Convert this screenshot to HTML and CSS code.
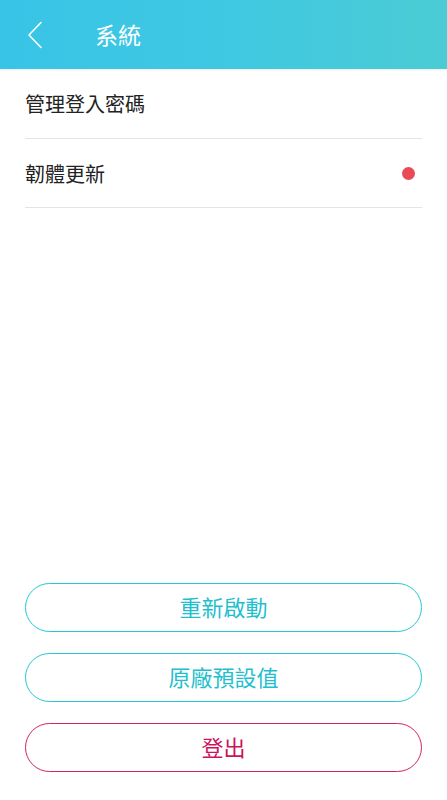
FILE: index.html
```html
<!DOCTYPE html>
<html lang="zh-Hant">
<head>
  <meta charset="UTF-8">
  <meta name="viewport" content="width=device-width, initial-scale=1.0">
  <title>系統</title>
  <link rel="stylesheet" href="styles.css">
</head>
<body>
  <div class="page">
    <div class="header">
      <a class="back" href="#">
        <svg width="16" height="28" viewBox="0 0 16 28">
          <polyline points="14,1.5 2,14 14,26.5" fill="none" stroke="#fff" stroke-width="1.6" stroke-linecap="round" stroke-linejoin="round"/>
        </svg>
      </a>
      <h1>系統</h1>
    </div>

    <div class="list">
      <div class="row">
        <span>管理登入密碼</span>
      </div>
      <div class="row">
        <span>韌體更新</span>
        <span class="dot"></span>
      </div>
    </div>

    <div class="actions">
      <button class="btn">重新啟動</button>
      <button class="btn">原廠預設值</button>
      <button class="btn btn-logout">登出</button>
    </div>
  </div>
</body>
</html>
```

FILE: styles.css
```css
body {
  margin: 0;
  font-family: "Noto Sans CJK TC", "Noto Sans", sans-serif;
  background: #fff;
  color: #222;
}
.page {
  height: 800px;
  display: flex;
  flex-direction: column;
}
.header {
  height: 69px;
  display: flex;
  align-items: center;
  background: linear-gradient(90deg, #38c4e7 0%, #3fc8e2 50%, #4bccd4 100%);
  box-shadow: 0 1px 2px rgba(0, 0, 0, 0.08);
}
.back {
  display: flex;
  margin-left: 27px;
  margin-top: 1px;
}
.header h1 {
  margin: 0 0 0 52px;
  font-size: 23px;
  font-weight: 400;
  color: #fff;
  line-height: 1;
}
.list {
  padding: 0 25px;
}
.row {
  height: 69px;
  display: flex;
  align-items: center;
  justify-content: space-between;
  border-bottom: 1px solid #e4e4e4;
  font-size: 20px;
  color: #222;
}
.row:last-child {
  height: 68px;
}
.dot {
  width: 13px;
  height: 13px;
  border-radius: 50%;
  background: #ea4a55;
  margin-right: 7px;
}
.actions {
  margin-top: auto;
  padding: 0 25px 28px;
  display: flex;
  flex-direction: column;
  gap: 21px;
}
.btn {
  height: 49px;
  border: 1.5px solid #22c8d6;
  border-radius: 25px;
  background: #fff;
  color: #1fbfcd;
  font-family: inherit;
  font-size: 22px;
  padding: 0 0 3px;
}
.btn-logout {
  border-color: #d2245f;
  color: #cc145a;
}
```
